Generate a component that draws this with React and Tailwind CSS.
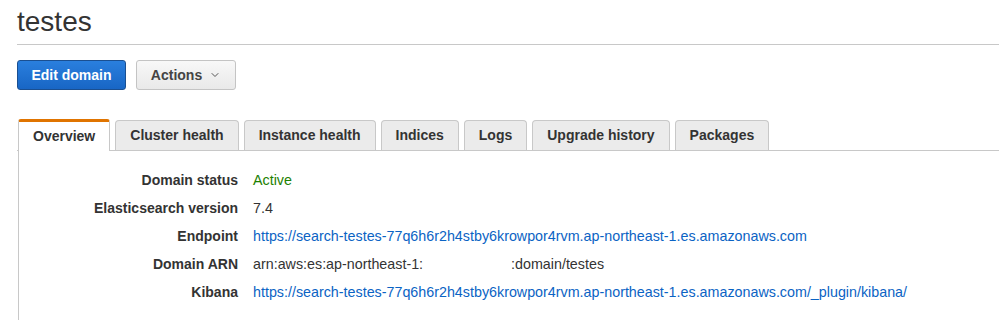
import { ChevronDown } from 'lucide-react';

const TABS = ['Overview', 'Cluster health', 'Instance health', 'Indices', 'Logs', 'Upgrade history', 'Packages'];

const ENDPOINT = 'https://search-testes-77q6h6r2h4stby6krowpor4rvm.ap-northeast-1.es.amazonaws.com';

export default function App() {
  return (
    <div className="w-[999px] h-[320px] overflow-hidden bg-white pl-[17px] text-[#333] font-['Liberation_Sans',Arial,sans-serif]">
      {/* Encabezado */}
      <div className="h-[45px] border-b border-[#c8c8c8] flex items-center">
        <h1 className="text-[28px] leading-none font-normal text-[#333] -mt-[1px]">testes</h1>
      </div>

      {/* Botones */}
      <div className="flex gap-[10px] mt-[15px]">
        <button className="h-[30px] w-[109px] rounded-[3px] border border-[#1a4f91] bg-gradient-to-b from-[#2a7fde] to-[#1866c5] text-white text-[14px] font-bold">
          Edit domain
        </button>
        <button className="h-[30px] w-[100px] rounded-[3px] border border-[#c4c4c4] bg-gradient-to-b from-[#f8f8f8] to-[#e9e9e9] text-[#444] text-[14px] font-bold flex items-center justify-center gap-[7px]">
          Actions
          <ChevronDown className="w-[12px] h-[12px] text-[#555]" strokeWidth={2} />
        </button>
      </div>

      {/* Pestañas */}
      <div className="mt-[29px] flex items-end gap-[5px] border-b border-[#c8c8c8] pl-px">
        {TABS.map((tab, i) =>
          i === 0 ? (
            <div
              key={tab}
              className="h-[32px] -mb-px px-[14px] flex items-center bg-white border-x border-[#c8c8c8] border-t-[3px] border-t-[#e07400] rounded-t-[3px] text-[14px] font-bold text-[#333]"
            >
              {tab}
            </div>
          ) : (
            <div
              key={tab}
              className="h-[30px] px-[14px] flex items-center bg-[#ebebeb] border border-b-0 border-[#c8c8c8] rounded-t-[4px] text-[14px] font-bold text-[#333]"
            >
              {tab}
            </div>
          )
        )}
      </div>

      {/* Panel */}
      <div className="ml-px border-l border-[#c8c8c8] h-[200px] pt-[15px]">
        <dl className="grid grid-cols-[219px_1fr] gap-x-[15px] text-[14px] leading-[28px]">
          <dt className="text-right font-bold text-[#333]">Domain status</dt>
          <dd className="text-[#1d8102] text-[14.3px]">Active</dd>
          <dt className="text-right font-bold text-[#333]">Elasticsearch version</dt>
          <dd className="text-[#333] text-[14.3px]">7.4</dd>
          <dt className="text-right font-bold text-[#333]">Endpoint</dt>
          <dd className="text-[#0b63c4] text-[14.3px]">{ENDPOINT}</dd>
          <dt className="text-right font-bold text-[#333]">Domain ARN</dt>
          <dd className="text-[#333] text-[14.3px] flex">
            <span>arn:aws:es:ap-northeast-1:</span>
            <span className="w-[88px]" />
            <span>:domain/testes</span>
          </dd>
          <dt className="text-right font-bold text-[#333]">Kibana</dt>
          <dd className="text-[#0b63c4] text-[14.3px]">{ENDPOINT}/_plugin/kibana/</dd>
        </dl>
      </div>
    </div>
  );
}
